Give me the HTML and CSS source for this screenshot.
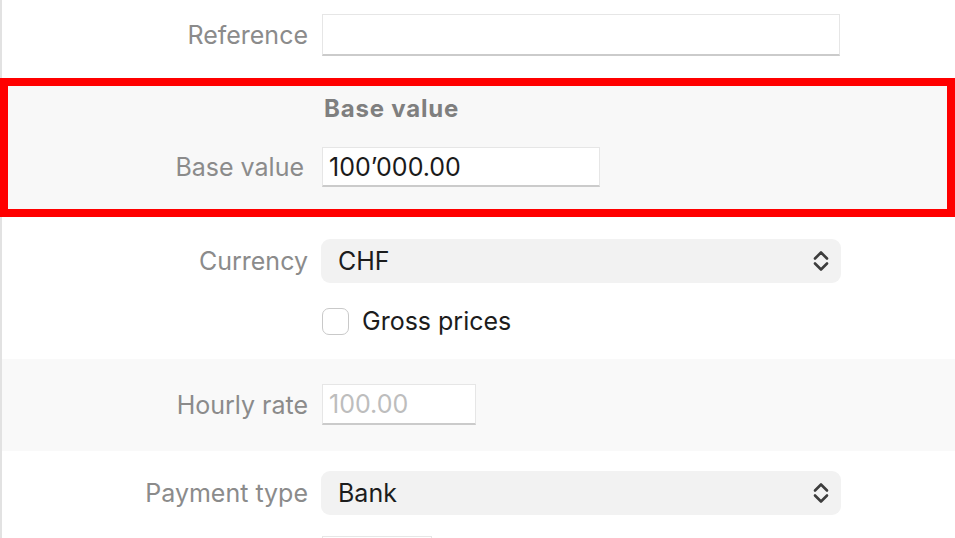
FILE: index.html
```html
<!DOCTYPE html>
<html lang="en">
<head>
<meta charset="utf-8">
<title>Form</title>
<link rel="stylesheet" href="styles.css">
</head>
<body>
<div class="page">
  <div class="row row-ref">
    <label class="label">Reference</label>
    <div class="control"><div class="input input-wide"></div></div>
  </div>

  <section class="highlight">
    <div class="row row-head">
      <span class="label"></span>
      <div class="control"><span class="heading">Base value</span></div>
    </div>
    <div class="row row-base">
      <label class="label">Base value</label>
      <div class="control"><div class="input input-mid">100’000.00</div></div>
    </div>
  </section>

  <div class="row row-currency">
    <label class="label">Currency</label>
    <div class="control">
      <div class="select"><span>CHF</span>
        <svg class="chev" width="16" height="22" viewBox="0 0 16 22"><path d="M2 8.5 L8 2.5 L14 8.5 M2 13.5 L8 19.5 L14 13.5" fill="none" stroke="#3d3d3d" stroke-width="2.6" stroke-linecap="round" stroke-linejoin="round"/></svg>
      </div>
    </div>
  </div>

  <div class="row row-check">
    <span class="label"></span>
    <div class="control check-control"><span class="checkbox"></span><span class="check-text">Gross prices</span></div>
  </div>

  <div class="band">
    <div class="row row-rate">
      <label class="label">Hourly rate</label>
      <div class="control"><div class="input input-short placeholder">100.00</div></div>
    </div>
  </div>

  <div class="row row-payment">
    <label class="label">Payment type</label>
    <div class="control">
      <div class="select"><span>Bank</span>
        <svg class="chev" width="16" height="22" viewBox="0 0 16 22"><path d="M2 8.5 L8 2.5 L14 8.5 M2 13.5 L8 19.5 L14 13.5" fill="none" stroke="#3d3d3d" stroke-width="2.6" stroke-linecap="round" stroke-linejoin="round"/></svg>
      </div>
    </div>
  </div>

  <div class="row row-next">
    <span class="label"></span>
    <div class="control"><div class="input input-tiny"></div></div>
  </div>
</div>
</body>
</html>
```
FILE: styles.css
```css
html, body {
  margin: 0;
  padding: 0;
  background: #ffffff;
  height: 100%;
  overflow: hidden;
}
body {
  font-family: Inter, "Noto Sans", "Liberation Sans", sans-serif;
  font-size: 25px;
  line-height: 1.2;
  color: #1c1c1c;
}
.page {
  border-left: 2px solid #e2e2e2;
  min-height: 100%;
  box-sizing: border-box;
  padding-top: 14px;
}
.row {
  display: grid;
  grid-template-columns: 306px 1fr;
  column-gap: 14px;
  align-items: center;
}
.label {
  text-align: right;
  color: #8b8b8b;
  white-space: nowrap;
}
.control {
  display: flex;
  align-items: center;
}
.input {
  box-sizing: border-box;
  height: 42px;
  background: #fff;
  border: 1px solid #e6e6e6;
  border-bottom: 2px solid #cbcbcb;
  padding: 0 6px;
  display: flex;
  align-items: center;
  color: #1a1a1a;
}
.input-wide { width: 518px; }
.input-mid { width: 278px; height: 40px; }
.input-short { width: 154px; height: 41px; }
.input-tiny { width: 110px; }
.placeholder { color: #bdbdbd; }

.highlight {
  margin: 22px 0 0 -2px;
  border: 8px solid #ff0000;
  background: #f8f8f8;
  padding: 9px 0 22px;
}
.highlight .row { grid-template-columns: 296px 1fr; column-gap: 18px; }
.heading {
  font-weight: 700;
  color: #7f7f7f;
  font-size: 24px;
  letter-spacing: 0.8px;
  line-height: 28px;
  padding-left: 2px;
}
.row-base { margin-top: 24px; }

.row-currency { margin-top: 22px; }
.select {
  box-sizing: border-box;
  width: 520px;
  height: 44px;
  margin-left: -1px;
  background: #f2f2f2;
  border-radius: 9px;
  display: flex;
  align-items: center;
  justify-content: space-between;
  padding: 0 12px 0 17px;
}
.chev { display: block; }

.row-check { margin-top: 25px; height: 27px; }
.check-control { gap: 13px; }
.checkbox {
  box-sizing: border-box;
  width: 27px;
  height: 27px;
  border: 1px solid #c9c9c9;
  border-radius: 7px;
  background: #fff;
}
.check-text { line-height: 27px; }

.band {
  margin-top: 24px;
  background: #f9f9f9;
  padding: 25px 0 26px;
}
.row-payment { margin-top: 20px; }
.row-next { margin-top: 21px; }
```
